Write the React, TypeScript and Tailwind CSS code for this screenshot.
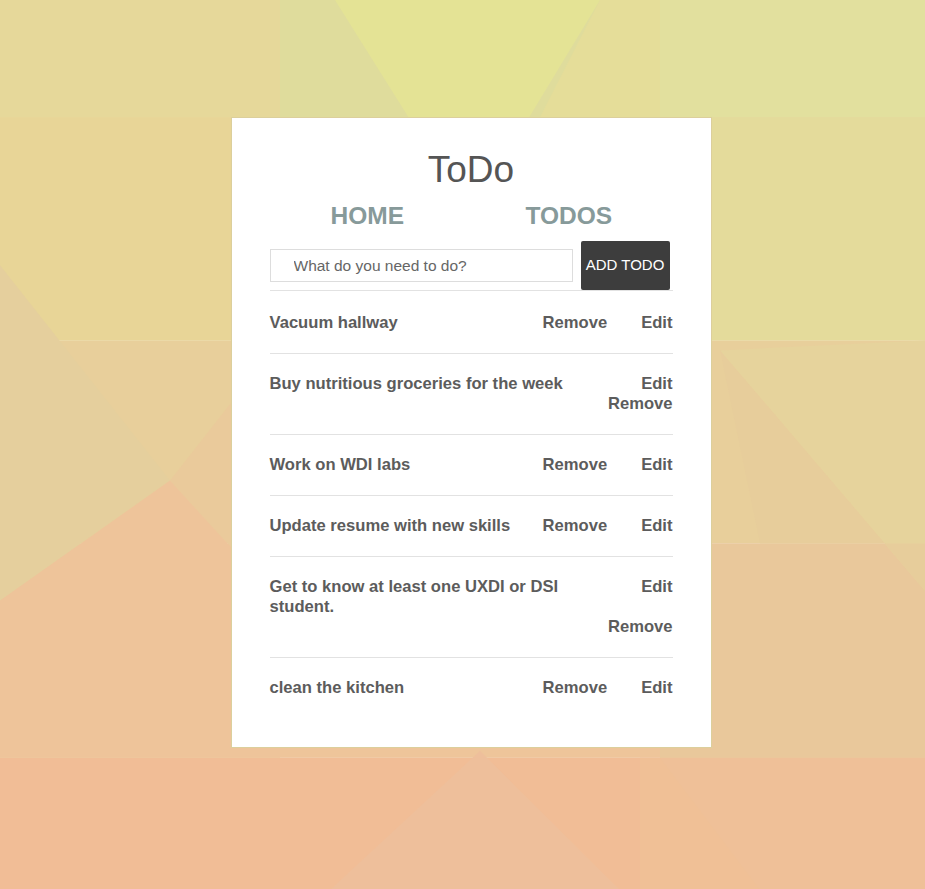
import React from 'react'

type Todo = {
  text: string
  layout: 'inline' | 'stacked' | 'wrapped'
}

const todos: Todo[] = [
  { text: 'Vacuum hallway', layout: 'inline' },
  { text: 'Buy nutritious groceries for the week', layout: 'stacked' },
  { text: 'Work on WDI labs', layout: 'inline' },
  { text: 'Update resume with new skills', layout: 'inline' },
  { text: 'Get to know at least one UXDI or DSI student.', layout: 'wrapped' },
  { text: 'clean the kitchen', layout: 'inline' },
]

function Background() {
  return (
    <svg
      className="absolute inset-0 w-full h-full"
      viewBox="0 0 925 889"
      preserveAspectRatio="none"
      aria-hidden="true"
    >
      {/* bands */}
      <rect x="0" y="0" width="925" height="117" fill="#e3db9b" />
      <rect x="0" y="117" width="925" height="223" fill="#e7d799" />
      <rect x="0" y="340" width="925" height="203" fill="#e8cf9b" />
      <rect x="0" y="543" width="925" height="214" fill="#eec59a" />
      <rect x="0" y="757" width="925" height="132" fill="#f1bd96" />

      {/* columns */}
      <rect x="0" y="0" width="280" height="117" fill="#e6d89a" />
      <rect x="280" y="0" width="380" height="117" fill="#dfdc9c" />
      <rect x="660" y="0" width="265" height="117" fill="#e2e09e" />
      <rect x="660" y="117" width="265" height="223" fill="#e4db9b" />
      <rect x="0" y="117" width="280" height="223" fill="#e8d597" />
      <rect x="660" y="543" width="265" height="214" fill="#e9c89b" />
      <rect x="660" y="757" width="265" height="132" fill="#efc098" />

      {/* triangles */}
      <polygon points="335,0 600,0 470,215" fill="#e4e395" />
      <polygon points="600,0 660,0 660,117 540,117" fill="#e5dd99" />
      <polygon points="0,265 170,480 0,600" fill="#e5cf9d" />
      <polygon points="170,480 280,340 280,600" fill="#eaca9b" />
      <polygon points="0,600 170,480 280,600 280,757 0,757" fill="#eec49a" />
      <polygon points="925,340 720,350 925,590" fill="#e6d39c" />
      <polygon points="720,350 925,590 925,543 760,543" fill="#e7cd9b" />
      <polygon points="480,750 620,889 330,889" fill="#eebf9b" />
      <polygon points="640,757 660,757 760,889 640,889" fill="#f0c096" />
    </svg>
  )
}

function Action({ children }: { children: React.ReactNode }) {
  return <span className="font-bold cursor-pointer">{children}</span>
}

function TodoRow({ todo, last }: { todo: Todo; last: boolean }) {
  const border = last ? '' : 'border-b border-[#e2e2e2]'

  if (todo.layout === 'stacked') {
    return (
      <li className={`flex justify-between py-[20px] ${border}`}>
        <span className="font-bold">{todo.text}</span>
        <div className="flex flex-col items-end">
          <Action>Edit</Action>
          <Action>Remove</Action>
        </div>
      </li>
    )
  }

  if (todo.layout === 'wrapped') {
    return (
      <li className={`py-[20px] ${border}`}>
        <div className="flex justify-between">
          <span className="font-bold max-w-[330px]">{todo.text}</span>
          <Action>Edit</Action>
        </div>
        <div className="text-right">
          <Action>Remove</Action>
        </div>
      </li>
    )
  }

  return (
    <li className={`flex justify-between py-[20px] ${border}`}>
      <span className="font-bold">{todo.text}</span>
      <div className="flex gap-[34px]">
        <Action>Remove</Action>
        <Action>Edit</Action>
      </div>
    </li>
  )
}

export default function App() {
  return (
    <div
      className="relative min-h-screen overflow-hidden"
      style={{ fontFamily: '"Liberation Sans", Arial, Helvetica, sans-serif' }}
    >
      <Background />

      <div className="relative flex justify-center pl-[17px] pt-[117px] pb-[142px]">
        <div className="w-[481px] bg-white border border-[#dccf9c] px-[38px] pt-[31px] pb-[29px]">
          <h1 className="text-center text-[37px] leading-[42px] text-[#555555]">ToDo</h1>

          <nav className="flex mt-[11px]">
            <a className="flex-1 text-center text-[24.5px] leading-[28px] font-bold text-[#879a9a] pr-[6px]">
              HOME
            </a>
            <a className="flex-1 text-center text-[24.5px] leading-[28px] font-bold text-[#879a9a] pr-[6px]">
              TODOS
            </a>
          </nav>

          <form className="flex items-center gap-[8px] mt-[11px] border-b border-[#e2e2e2]">
            <input
              type="text"
              placeholder="What do you need to do?"
              className="w-[303px] h-[33px] border border-[#dddddd] pl-[23px] text-[15.5px] text-[#555555] placeholder:text-[#666666] outline-none"
            />
            <button
              type="button"
              className="w-[89px] h-[49px] bg-[#3d3d3d] text-white text-[15px] rounded-[2px]"
            >
              ADD TODO
            </button>
          </form>

          <ul className="mt-[2px] text-[16.6px] leading-[20px] text-[#5c5c5c]">
            {todos.map((todo, i) => (
              <TodoRow key={todo.text} todo={todo} last={i === todos.length - 1} />
            ))}
          </ul>
        </div>
      </div>
    </div>
  )
}
